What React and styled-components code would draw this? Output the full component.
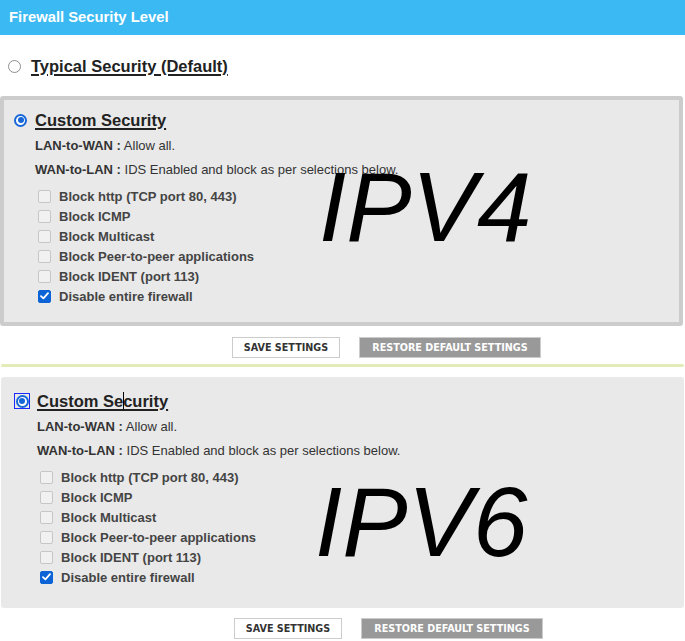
import React from "react";
import styled, { createGlobalStyle, css } from "styled-components";

const Global = createGlobalStyle`
  html, body { margin: 0; padding: 0; background: #ffffff; }
  body { font-family: "Liberation Sans", Arial, sans-serif; }
  * { box-sizing: border-box; }
`;

const Page = styled.div`
  width: 685px;
  display: flex;
  flex-direction: column;
`;

const Header = styled.div`
  height: 35px;
  background: #3bb9f2;
  color: #ffffff;
  font-weight: bold;
  font-size: 14.8px;
  line-height: 35px;
  padding-left: 9px;
`;

const TypicalRow = styled.div`
  display: flex;
  align-items: center;
  gap: 10px;
  height: 24px;
  margin-top: 19px;
  padding-left: 8px;
`;

const Title = styled.span`
  font-size: 16.5px;
  font-weight: bold;
  color: #222222;
  text-decoration: underline;
  text-decoration-thickness: 1.5px;
  text-underline-offset: 2px;
`;

const Caret = styled.span`
  display: inline-block;
  width: 1px;
  height: 19px;
  background: #000;
  vertical-align: -4px;
  margin: 0 -0.5px;
`;

const Radio = styled.span`
  width: 13px;
  height: 13px;
  border-radius: 50%;
  flex: 0 0 auto;
  background: #ffffff;
  position: relative;
  ${(p) =>
    p.$checked
      ? css`
          border: 2px solid #1767d9;
          &::after {
            content: "";
            position: absolute;
            left: 1.5px;
            top: 1.5px;
            width: 6px;
            height: 6px;
            border-radius: 50%;
            background: #1767d9;
          }
        `
      : css`
          border: 1.5px solid #8f8f8f;
        `}
`;

const FocusRing = styled.span`
  display: flex;
  flex: 0 0 auto;
  padding: 0.5px;
  border: 1.5px solid #1a2bff;
  margin-left: -2px;
  margin-right: -1px;
`;

const Panel = styled.div`
  position: relative;
  display: flex;
  flex-direction: column;
  background: #e9e9e9;
  border-radius: 3px;
  ${(p) =>
    p.$bordered
      ? css`
          margin: 18px 2px 0 0;
          border: 4px solid #cccccc;
          padding: 6px 10px 16px 10px;
        `
      : css`
          margin: 10px 1px 0 1px;
          padding: 10px 10px 21px 15px;
        `}
`;

const PanelTitle = styled.div`
  display: flex;
  align-items: center;
  gap: 8px;
  height: 28px;
`;

const InfoLine = styled.div`
  height: 24px;
  line-height: 24px;
  margin-left: 21px;
  font-size: 13px;
  color: #333333;
  b { font-weight: bold; }
`;

const Options = styled.div`
  display: flex;
  flex-direction: column;
  margin-top: 4px;
  margin-left: 24px;
`;

const OptionRow = styled.div`
  display: flex;
  align-items: center;
  gap: 8px;
  height: 20px;
  font-size: 13px;
  font-weight: bold;
  color: #444444;
`;

const Box = styled.span`
  width: 13px;
  height: 13px;
  border-radius: 2px;
  flex: 0 0 auto;
  display: flex;
  align-items: center;
  justify-content: center;
  ${(p) =>
    p.$checked
      ? css`
          background: #0b63d6;
          border: 1px solid #0b63d6;
        `
      : css`
          background: #f1f1f1;
          border: 1px solid #c6c6c6;
        `}
`;

const BigLabel = styled.div`
  position: absolute;
  font-family: "Liberation Sans", Arial, sans-serif;
  font-style: italic;
  font-size: 98px;
  line-height: 1;
  color: #000000;
  pointer-events: none;
`;

const ButtonRow = styled.div`
  display: flex;
  gap: 19px;
  margin-top: ${(p) => p.$top}px;
  padding-left: ${(p) => p.$indent}px;
`;

const Button = styled.button`
  height: 21px;
  padding: 0 10px;
  font-family: "DejaVu Sans Condensed", "DejaVu Sans", Verdana, sans-serif;
  font-stretch: condensed;
  font-weight: bold;
  font-size: 10.7px;
  border: 1px solid #cccccc;
  border-radius: 0;
  cursor: pointer;
  ${(p) =>
    p.$primary
      ? css`
          background: #ffffff;
          color: #333333;
          width: 108px;
        `
      : css`
          background: #999999;
          color: #ffffff;
          width: 182px;
        `}
`;

const Divider = styled.div`
  height: 3px;
  margin: 6px 1px 0 1px;
  background: #e3ecb8;
  border-radius: 2px;
`;

const Check = () => (
  <svg width="9" height="8" viewBox="0 0 9 8">
    <path d="M1 4.2 L3.4 6.4 L8 1.2" fill="none" stroke="#fff" strokeWidth="1.8" strokeLinecap="round" strokeLinejoin="round" />
  </svg>
);

const options = [
  ["Block http (TCP port 80, 443)", false],
  ["Block ICMP", false],
  ["Block Multicast", false],
  ["Block Peer-to-peer applications", false],
  ["Block IDENT (port 113)", false],
  ["Disable entire firewall", true],
];

function SecurityPanel({ bordered, label, labelPos, focus }) {
  return (
    <Panel $bordered={bordered}>
      <PanelTitle>
        {focus ? (
          <FocusRing>
            <Radio $checked />
          </FocusRing>
        ) : (
          <Radio $checked />
        )}
        {focus ? (
          <Title>
            Custom Se<Caret />curity
          </Title>
        ) : (
          <Title>Custom Security</Title>
        )}
      </PanelTitle>
      <InfoLine>
        <b>LAN-to-WAN :</b> Allow all.
      </InfoLine>
      <InfoLine>
        <b>WAN-to-LAN :</b> IDS Enabled and block as per selections below.
      </InfoLine>
      <Options>
        {options.map(([text, checked]) => (
          <OptionRow key={text}>
            <Box $checked={checked}>{checked && <Check />}</Box>
            {text}
          </OptionRow>
        ))}
      </Options>
      <BigLabel style={{ top: labelPos.top, left: labelPos.left }}>{label}</BigLabel>
    </Panel>
  );
}

export default function App() {
  return (
    <Page>
      <Global />
      <Header>Firewall Security Level</Header>
      <TypicalRow>
        <Radio />
        <Title>Typical Security (Default)</Title>
      </TypicalRow>
      <SecurityPanel bordered label="IPV4" labelPos={{ top: 58, left: 315 }} />
      <ButtonRow $indent={232} $top={11}>
        <Button $primary>SAVE SETTINGS</Button>
        <Button>RESTORE DEFAULT SETTINGS</Button>
      </ButtonRow>
      <Divider />
      <SecurityPanel label="IPV6" labelPos={{ top: 96, left: 314 }} focus />
      <ButtonRow $indent={234} $top={10}>
        <Button $primary>SAVE SETTINGS</Button>
        <Button>RESTORE DEFAULT SETTINGS</Button>
      </ButtonRow>
    </Page>
  );
}
